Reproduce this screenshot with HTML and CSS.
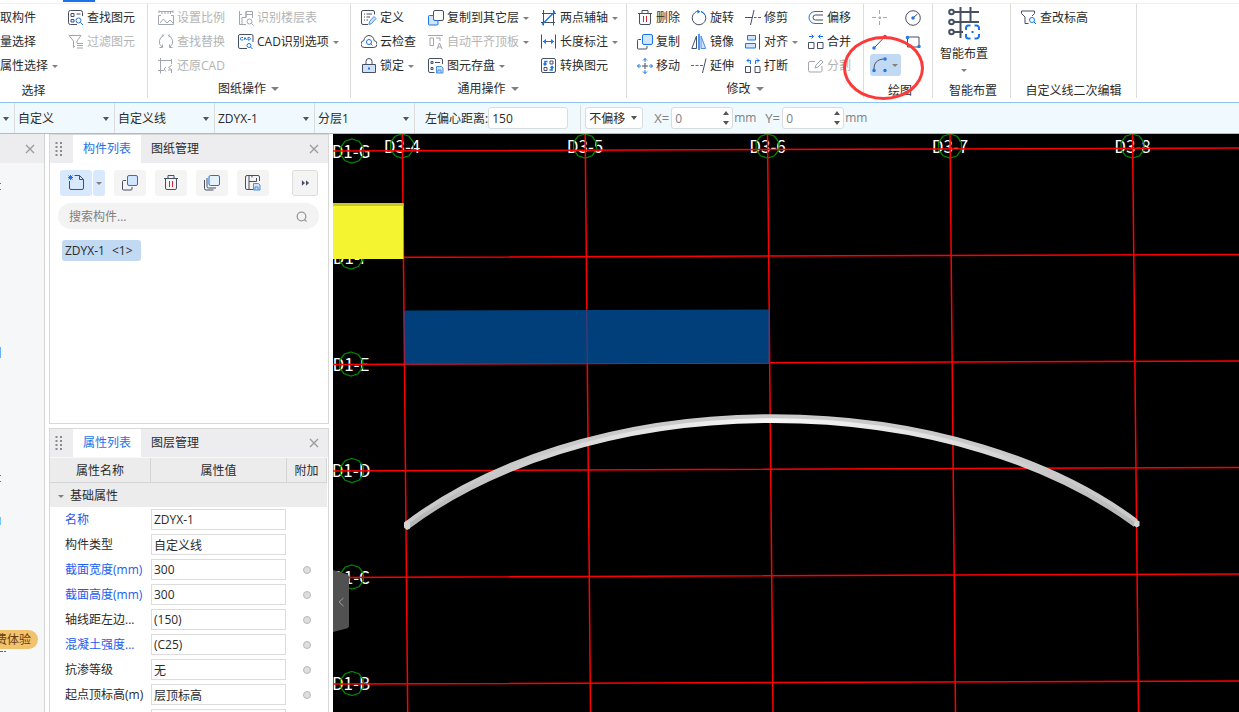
FILE: index.html
```html
<!DOCTYPE html>
<html lang="zh-CN">
<head>
<meta charset="utf-8">
<title>自定义线</title>
<link rel="stylesheet" href="styles.css">
</head>
<body>
<svg class="defs" aria-hidden="true">
  <symbol id="i-find" viewBox="0 0 16 16"><path class="d" d="M9 14.500H2.500a2 2 0 0 1-2-2V2.500a2 2 0 0 1 2-2h10a2 2 0 0 1 2 2V6M3 3.500h3v3H3zM8.500 4h4M3 9.500h3v2.500H3z"/><circle class="b" cx="10.500" cy="10.500" r="2.500"/><path class="b" d="M12.500 12.500l2.500 2.500"/></symbol>
  <symbol id="i-filter" viewBox="0 0 16 16"><path class="d" d="M1 1.500h12L9 7v2M1 1.500L5.500 7v6.500L7 12M9 9.500h6M9 11.500h6M9 14h6"/></symbol>
  <symbol id="i-scale" viewBox="0 0 16 16"><path class="d" d="M1 3V.5M1 1.500h14M15 3V.5M4 2v2M7 2v2M10 2v2M12.500 2v2M3 5.500H.5v9h15v-9H13M2 13l3.500-4L9 13l3-3 3 3"/></symbol>
  <symbol id="i-floor" viewBox="0 0 16 16"><path class="d" d="M1.500 1v13.500H8M1.500 4.500H4M4 7.500h4V1.500h6.500v6.500M8 4.500h6M4 7.500v7M8 1.500v6"/><circle class="d" cx="11.500" cy="11.500" r="2.500"/><path class="d" d="M13.500 13.500l2 2"/></symbol>
  <symbol id="i-replace" viewBox="0 0 16 16"><path class="d" d="M6 1.500A6.500 6.500 0 0 0 4 13M10 1.500A6.500 6.500 0 0 1 12 13M1.500 13.500H4.500V10.500M11.500 10.500v3h3M6 1.500L4 1M10 1.500l2-.5"/></symbol>
  <symbol id="i-cad" viewBox="0 0 16 16"><path class="d" d="M9 14.500H2a1.500 1.500 0 0 1-1.500-1.500V2A1.500 1.500 0 0 1 2 .5h11.500A1.500 1.500 0 0 1 15 2v6"/><path class="b" d="M5 3.500H3.500a1 1 0 0 0-1 1V5a1 1 0 0 0 1 1H5M6 6l1-2.500L8.500 6M10 3.500V6h1.500l1-1.200-1-1.300z"/><circle class="b" cx="11" cy="11.500" r="2"/><path class="b" d="M12.500 13l2 2"/></symbol>
  <symbol id="i-restore" viewBox="0 0 16 16"><path class="d" d="M0 2.500h14M2.500 0v15.500M13.500 1v5M0 12.500h6M14 7l-3.500 2.500L14 12M8 9l-2 2 2 2.500M10 12h3.500v3"/></symbol>
  <symbol id="i-define" viewBox="0 0 16 16"><path class="d" d="M7 14.500H2A1.500 1.500 0 0 1 .5 13V2A1.500 1.500 0 0 1 2 .5h10A1.500 1.500 0 0 1 13.500 2v2.500M3 4h1M5.500 4H11M3 7h1M5.500 7H9M3 10h1M5.500 10H7"/><path class="f" d="M8 14.500l.5-3L13 6.500l2 2-4.500 5z"/></symbol>
  <symbol id="i-cloud" viewBox="0 0 16 16"><path class="d" d="M4 13.500a3.500 3.500 0 0 1-1-7 5 5 0 0 1 10 0 3.500 3.500 0 0 1-1 7z"/><circle class="b" cx="8" cy="8" r="2.500"/><path class="b" d="M9.500 9.500l2 2"/></symbol>
  <symbol id="i-lock" viewBox="0 0 16 16"><path class="f dk" d="M1.500 6.500h13v8h-13z"/><path class="d" d="M5 6V3.500a3 3 0 0 1 6 0V6"/><path class="b" d="M8 9v3M7 10.500h2"/></symbol>
  <symbol id="i-copyto" viewBox="0 0 16 16"><rect class="w" x="5.500" y=".5" width="10" height="10" rx="1.500"/><path class="bf" d="M5.500 5.500h-4a1 1 0 0 0-1 1v7.500a1 1 0 0 0 1 1H9a1 1 0 0 0 1-1v-3.500H6.500a1 1 0 0 1-1-1z"/></symbol>
  <symbol id="i-align" viewBox="0 0 16 16"><path class="d" d="M0 1.500h15M2 4h3.500v7.500H2zM8 4h4v3M9 15l2.500-6 2.500 6M10 13h3"/></symbol>
  <symbol id="i-store" viewBox="0 0 16 16"><path class="d" d="M6.500 14.500H2A1.500 1.500 0 0 1 .5 13V2A1.500 1.500 0 0 1 2 .5h11A1.500 1.500 0 0 1 14.500 2v4M3 3.500h2v2H3zM7 4.500h5M3 9.500h2v2H3z"/><path class="f" d="M8.500 8.500h5l1.500 1.500v5H8.500zM10 15v-3h3v3"/></symbol>
  <symbol id="i-axis" viewBox="0 0 16 16"><path class="d" d="M2.500 0v15.500M12.500 0v15.500M1 3.500h14M0 12.500h14"/><path class="b2" d="M1 14.500L14 1.500"/></symbol>
  <symbol id="i-length" viewBox="0 0 16 16"><path class="d" d="M.5.500v14M14.500.500v14"/><path class="b" d="M2 7.500h11"/><path class="bk" d="M5 5v5L2 7.500zM10 5v5l3-2.500z"/></symbol>
  <symbol id="i-convert" viewBox="0 0 16 16"><rect class="d" x=".5" y=".5" width="14" height="14" rx="1.500"/><path class="d" d="M9 3h3v3H9zM3 9.500h3v3H3z"/><path class="b2" d="M6.500 3.500H4V7M2.500 5.500L4 7l1.500-1.500M8.500 12H11V8.500M9.500 10L11 8.500l1.500 1.500"/></symbol>
  <symbol id="i-trash" viewBox="0 0 16 16"><path class="d" d="M1 3.500h14M5 3V.5h6V3M2.500 4v9a1.500 1.500 0 0 0 1.500 1.500h8a1.500 1.500 0 0 0 1.500-1.500V4"/><path class="r" d="M6.500 6v6M9.500 6v6"/></symbol>
  <symbol id="i-copy" viewBox="0 0 16 16"><rect class="bf" x="5.500" y=".5" width="10" height="10" rx="1.500"/><path class="d" d="M4 5.500H1.500a1 1 0 0 0-1 1V14a1 1 0 0 0 1 1H9a1 1 0 0 0 1-1v-2"/></symbol>
  <symbol id="i-move" viewBox="0 0 16 16"><path class="d" d="M8 5v6M5 8h6"/><path class="b" d="M8 4V.5M6 2.500l2-2 2 2M8 12v3.500M6 13.500l2 2 2-2M4 8H.5M2.500 6l-2 2 2 2M12 8h3.500M13.500 6l2 2-2 2"/></symbol>
  <symbol id="i-rotate" viewBox="0 0 16 16"><path class="d" d="M10 1.500A6.800 6.800 0 1 1 4 2.500"/><path class="b" d="M4 2.500a6.500 6.500 0 0 1 2.500-1.300M10 1.500A6.500 6.500 0 0 1 13.500 4.500"/><path class="bk" d="M6-.3L9.500 1.500 6.500 3.500z"/></symbol>
  <symbol id="i-mirror" viewBox="0 0 16 16"><path class="d" d="M5.500 2v12.500H.8z"/><path class="b2" d="M8 0v16"/><path class="f" d="M10 2v12.500h4.700z"/></symbol>
  <symbol id="i-extend" viewBox="0 0 16 16"><path class="b" d="M0 7.500h3M4.500 7.500h3M9 7.500h3"/><path class="d" d="M15 .5L11.500 15"/></symbol>
  <symbol id="i-trim" viewBox="0 0 16 16"><path class="d" d="M0 7.500h7.500M9 0L5.500 15"/><path class="b" d="M9 7.500h2.500M13 7.500h3"/></symbol>
  <symbol id="i-align2" viewBox="0 0 16 16"><path class="bf" d="M2.500 1.500h8v4.500h-8zM.5 9.500h10V14H.5z"/><path class="d" d="M14.500 0v15.500"/></symbol>
  <symbol id="i-break" viewBox="0 0 16 16"><path class="d" d="M.5 8.500h5v6h-5zM10 8.500h5v6h-5z"/><path class="b" d="M5.500 6V2.500H2M4 .5l-2 2 2 2M10.500 6V2.500h4M12 .5l2 2-2 2"/></symbol>
  <symbol id="i-merge" viewBox="0 0 16 16"><path class="d" d="M.5 8.500h5.500v6H.5zM9.500 8.500H15v6H9.500z"/><path class="b" d="M1 2.500h4.500M3.500.500l2 2-2 2M15 2.500h-4.500M12.500.500l-2 2 2 2"/></symbol>
  <symbol id="i-offset" viewBox="0 0 16 16"><path class="b" d="M15 1.500H7a6 6 0 0 0 0 12h8"/><path class="d" d="M15 5H7.500a2.500 2.500 0 0 0 0 5H15"/></symbol>
  <symbol id="i-split" viewBox="0 0 16 16"><path class="d" d="M7 3.500H2A1.500 1.500 0 0 0 .5 5v7.500A1.500 1.500 0 0 0 2 14h10.500a1.500 1.500 0 0 0 1.500-1.500V8M7 10l1-3L13 2l2 2-5 5z"/></symbol>
  <symbol id="i-point" viewBox="0 0 16 16"><path class="g" d="M7.500 0v4M7.500 11v4M0 7.500h4M11 7.500h4"/><path class="g" d="M7 7h1.500v1.500H7z"/></symbol>
  <symbol id="i-circle" viewBox="0 0 16 16"><circle class="d" cx="8" cy="8" r="7.300"/><path class="d" d="M8.500 7.500l4-3.500"/><circle class="b2" cx="8" cy="8" r="1"/></symbol>
  <symbol id="i-line" viewBox="0 0 16 16"><path class="d" d="M3 13L12 3.500"/><circle class="b2" cx="2" cy="14" r="1"/><circle class="b2" cx="13" cy="2.500" r="1"/></symbol>
  <symbol id="i-rect" viewBox="0 0 16 16"><path class="d" d="M2.500 4.500V13H13M14 11V3H4"/><circle class="b2" cx="2.500" cy="3.500" r="1"/><circle class="b2" cx="14" cy="12.500" r="1"/></symbol>
  <symbol id="i-arc" viewBox="0 0 16 16"><path class="d" d="M2 12C2 6 5 2.500 11.500 2"/><circle class="b2" cx="2" cy="13.500" r="1"/><circle class="b2" cx="13" cy="2" r="1"/><circle class="b2" cx="13" cy="13.500" r="1"/></symbol>
  <symbol id="i-level" viewBox="0 0 16 16"><path class="d" d="M.5 1h13v2.500L11 6M.5 1v2.500L4 7v6.500h3.500"/><circle class="b" cx="11" cy="10" r="2.500"/><path class="b" d="M13 12l2 2"/></symbol>
  <symbol id="i-grid" viewBox="0 0 32 34"><path class="d3" d="M6 6h25M6 16h25M6 26h9M12.500 1v31M22.500 1v15"/><circle class="d3 wf" cx="3.500" cy="6" r="2.300"/><circle class="d3 wf" cx="3.500" cy="16" r="2.300"/><circle class="d3 wf" cx="3.500" cy="26" r="2.300"/><path class="b3" d="M18 24v-2a2.500 2.500 0 0 1 2.500-2.500h2M26.500 19.500h2A2.500 2.500 0 0 1 31 22v2M31 28v2a2.500 2.500 0 0 1-2.500 2.500h-2M22.500 32.500h-2A2.500 2.500 0 0 1 18 30v-2M23.500 26h2"/></symbol>
  <symbol id="i-new" viewBox="0 0 16 16"><path class="d" d="M6.500.5h5l4 4V13a1.500 1.500 0 0 1-1.500 1.500H3A1.500 1.500 0 0 1 1.500 13V6M11.500.500v4h4"/><path class="b" d="M.5.500l4 4M4.500.500l-4 4M2.500 0v5M0 2.500h5"/></symbol>
  <symbol id="i-layers" viewBox="0 0 16 16"><rect class="lf" x="5" y=".5" width="10.500" height="10" rx="1.500"/><path class="d" d="M3 3v8.500A1.500 1.500 0 0 0 4.500 13H12M.5 5v8.500A1.500 1.500 0 0 0 2 15h7.500"/></symbol>
  <symbol id="i-save" viewBox="0 0 16 16"><path class="d" d="M8 14.500H2A1.500 1.500 0 0 1 .5 13V2A1.500 1.500 0 0 1 2 .5h11A1.500 1.500 0 0 1 14.500 2v4M4 .5v14M4 6.500h7.500V3M7 .5v2"/><path class="f" d="M8.500 8.500h5l1.500 1.500v5H8.500zM10 15v-3h3v3"/></symbol>
  <symbol id="i-close" viewBox="0 0 10 10"><path class="c" d="M1 1l8 8M9 1L1 9"/></symbol>
  <symbol id="i-search" viewBox="0 0 12 12"><circle class="c" cx="5.500" cy="5.500" r="4.300"/><path class="c" d="M8.500 8.500l2 2"/></symbol>
  <symbol id="i-more" viewBox="0 0 10 8"><path class="k" d="M1 1l3.500 3L1 7zM5.500 1L9 4 5.500 7z"/></symbol>
  <symbol id="i-grip" viewBox="0 0 8 16"><path class="grip" d="M1.500 1v14M6 1v14"/></symbol>
</svg>

<header class="ribbon">
  <div class="tabline"><span class="tabmark"></span></div>
  <div class="groups">
    <section class="group g-select">
      <div class="tools">
        <div class="col col-cut">
          <button class="tool">拾取构件</button>
          <button class="tool">批量选择</button>
          <button class="tool drop">按属性选择</button>
        </div>
        <div class="col">
          <button class="tool"><svg><use href="#i-find"/></svg>查找图元</button>
          <button class="tool" disabled><svg><use href="#i-filter"/></svg>过滤图元</button>
        </div>
      </div>
      <h2 class="low">选择</h2>
    </section>
    <section class="group g-sheet">
      <div class="tools">
        <div class="col">
          <button class="tool" disabled><svg><use href="#i-scale"/></svg>设置比例</button>
          <button class="tool" disabled><svg><use href="#i-replace"/></svg>查找替换</button>
          <button class="tool" disabled><svg><use href="#i-restore"/></svg>还原CAD</button>
        </div>
        <div class="col">
          <button class="tool" disabled><svg><use href="#i-floor"/></svg>识别楼层表</button>
          <button class="tool drop"><svg><use href="#i-cad"/></svg>CAD识别选项</button>
        </div>
      </div>
      <h2 class="more">图纸操作</h2>
    </section>
    <section class="group g-common">
      <div class="tools">
        <div class="col">
          <button class="tool"><svg><use href="#i-define"/></svg>定义</button>
          <button class="tool"><svg><use href="#i-cloud"/></svg>云检查</button>
          <button class="tool drop"><svg><use href="#i-lock"/></svg>锁定</button>
        </div>
        <div class="col">
          <button class="tool drop"><svg><use href="#i-copyto"/></svg>复制到其它层</button>
          <button class="tool drop" disabled><svg><use href="#i-align"/></svg>自动平齐顶板</button>
          <button class="tool drop"><svg><use href="#i-store"/></svg>图元存盘</button>
        </div>
        <div class="col">
          <button class="tool drop"><svg><use href="#i-axis"/></svg>两点辅轴</button>
          <button class="tool drop"><svg><use href="#i-length"/></svg>长度标注</button>
          <button class="tool"><svg><use href="#i-convert"/></svg>转换图元</button>
        </div>
      </div>
      <h2 class="more">通用操作</h2>
    </section>
    <section class="group g-modify">
      <div class="tools">
        <div class="col">
          <button class="tool"><svg><use href="#i-trash"/></svg>删除</button>
          <button class="tool"><svg><use href="#i-copy"/></svg>复制</button>
          <button class="tool"><svg><use href="#i-move"/></svg>移动</button>
        </div>
        <div class="col">
          <button class="tool"><svg><use href="#i-rotate"/></svg>旋转</button>
          <button class="tool"><svg><use href="#i-mirror"/></svg>镜像</button>
          <button class="tool"><svg><use href="#i-extend"/></svg>延伸</button>
        </div>
        <div class="col">
          <button class="tool"><svg><use href="#i-trim"/></svg>修剪</button>
          <button class="tool drop"><svg><use href="#i-align2"/></svg>对齐</button>
          <button class="tool"><svg><use href="#i-break"/></svg>打断</button>
        </div>
        <div class="col">
          <button class="tool"><svg><use href="#i-offset"/></svg>偏移</button>
          <button class="tool"><svg><use href="#i-merge"/></svg>合并</button>
          <button class="tool" disabled><svg><use href="#i-split"/></svg>分割</button>
        </div>
      </div>
      <h2 class="more">修改</h2>
    </section>
    <section class="group g-draw">
      <div class="tools">
        <div class="col">
          <button class="tool" aria-label="点"><svg><use href="#i-point"/></svg></button>
          <button class="tool" aria-label="直线"><svg><use href="#i-line"/></svg></button>
          <button class="tool drop active" aria-label="弧"><svg><use href="#i-arc"/></svg></button>
        </div>
        <div class="col">
          <button class="tool" aria-label="圆"><svg><use href="#i-circle"/></svg></button>
          <button class="tool" aria-label="矩形"><svg><use href="#i-rect"/></svg></button>
        </div>
      </div>
      <h2 class="low">绘图</h2>
      <span class="callout"></span>
    </section>
    <section class="group g-smart">
      <div class="tools">
        <button class="big"><svg><use href="#i-grid"/></svg><span>智能布置</span><i class="tri"></i></button>
      </div>
      <h2 class="low">智能布置</h2>
    </section>
    <section class="group g-edit">
      <div class="tools">
        <div class="col">
          <button class="tool"><svg><use href="#i-level"/></svg>查改标高</button>
        </div>
      </div>
      <h2 class="low">自定义线二次编辑</h2>
    </section>
  </div>
</header>

<form class="options">
  <div class="pick pick-cut"><select aria-label="楼层"><option></option></select></div>
  <div class="pick"><select aria-label="类别"><option>自定义</option></select></div>
  <div class="pick"><select aria-label="类型"><option>自定义线</option></select></div>
  <div class="pick"><select aria-label="构件"><option>ZDYX-1</option></select></div>
  <div class="pick"><select aria-label="分层"><option>分层1</option></select></div>
  <label class="ecc" for="ecc">左偏心距离:</label>
  <input id="ecc" class="box wide" value="150">
  <span class="rule"></span>
  <div class="pick boxed"><select aria-label="偏移方式"><option>不偏移</option></select></div>
  <label class="axis" for="dx">X=</label>
  <span class="spin"><input id="dx" class="box" value="0" disabled><i class="up"></i><i class="down"></i></span>
  <span class="unit">mm</span>
  <label class="axis" for="dy">Y=</label>
  <span class="spin"><input id="dy" class="box" value="0" disabled><i class="up"></i><i class="down"></i></span>
  <span class="unit">mm</span>
</form>

<main class="work">
  <aside class="side">
    <div class="bar"><button class="x" aria-label="关闭"><svg><use href="#i-close"/></svg></button></div>
    <svg class="marks" aria-hidden="true"><path stroke="#4a7aa8" d="M0 20.500h1M0 26.500h1M0 312.500h1M0 318.500h1"/><path stroke="#6ab0fa" d="M.5 184v11"/><path stroke="#7cc4fa" d="M.5 354v8"/><path stroke="#666" d="M0 488.500h3M4 488.500h2"/></svg>
    <span class="trial">免费体验</span>
  </aside>

  <div class="panels">
    <section class="panel parts">
      <div class="bar">
        <svg class="grab"><use href="#i-grip"/></svg>
        <button class="tab on">构件列表</button><button class="tab">图纸管理</button>
        <button class="x" aria-label="关闭"><svg><use href="#i-close"/></svg></button>
      </div>
      <div class="actions">
        <div class="pair"><button aria-label="新建"><svg><use href="#i-new"/></svg></button><button class="arrow" aria-label="新建选项"><i class="tri"></i></button></div>
        <button aria-label="复制"><svg><use href="#i-copy"/></svg></button>
        <button aria-label="删除"><svg><use href="#i-trash"/></svg></button>
        <button aria-label="层间复制"><svg><use href="#i-layers"/></svg></button>
        <button aria-label="存档"><svg><use href="#i-save"/></svg></button>
        <button class="next" aria-label="更多"><svg><use href="#i-more"/></svg></button>
      </div>
      <div class="search"><input aria-label="搜索构件" placeholder="搜索构件..."><svg><use href="#i-search"/></svg></div>
      <ul class="list"><li><span>ZDYX-1</span><span>&lt;1&gt;</span></li></ul>
    </section>

    <section class="panel props">
      <div class="bar">
        <svg class="grab"><use href="#i-grip"/></svg>
        <button class="tab on">属性列表</button><button class="tab">图层管理</button>
        <button class="x" aria-label="关闭"><svg><use href="#i-close"/></svg></button>
      </div>
      <table>
        <colgroup><col class="c-name"><col class="c-value"><col class="c-add"></colgroup>
        <thead><tr><th>属性名称</th><th>属性值</th><th>附加</th></tr></thead>
        <tbody>
          <tr class="cat"><td colspan="3"><i class="tri"></i>基础属性</td></tr>
          <tr><td class="hot"><label for="p1">名称</label></td><td><input id="p1" value="ZDYX-1"></td><td></td></tr>
          <tr><td><label for="p2">构件类型</label></td><td><input id="p2" value="自定义线"></td><td></td></tr>
          <tr><td class="hot"><label for="p3">截面宽度(mm)</label></td><td><input id="p3" value="300"></td><td><input type="checkbox" aria-label="附加截面宽度"></td></tr>
          <tr><td class="hot"><label for="p4">截面高度(mm)</label></td><td><input id="p4" value="300"></td><td><input type="checkbox" aria-label="附加截面高度"></td></tr>
          <tr><td><label for="p5">轴线距左边...</label></td><td><input id="p5" value="(150)"></td><td><input type="checkbox" aria-label="附加轴线距左边"></td></tr>
          <tr><td class="hot"><label for="p6">混凝土强度...</label></td><td><input id="p6" value="(C25)"></td><td><input type="checkbox" aria-label="附加混凝土强度"></td></tr>
          <tr><td><label for="p7">抗渗等级</label></td><td><input id="p7" value="无"></td><td><input type="checkbox" aria-label="附加抗渗等级"></td></tr>
          <tr><td><label for="p8">起点顶标高(m)</label></td><td><input id="p8" value="层顶标高"></td><td><input type="checkbox" aria-label="附加起点顶标高"></td></tr>
          <tr><td></td><td><input aria-label="终点顶标高"></td><td></td></tr>
        </tbody>
      </table>
    </section>
  </div>

  <div class="view">
    <svg class="drawing" role="img" aria-label="轴网平面">
      <defs>
        <linearGradient id="face" gradientUnits="userSpaceOnUse" x1="72" y1="0" x2="806" y2="0">
          <stop offset="0" stop-color="#b4b4b4"/><stop offset=".25" stop-color="#dcdcdc"/><stop offset=".5" stop-color="#f6f6f6"/><stop offset=".75" stop-color="#dfdfdf"/><stop offset="1" stop-color="#b4b4b4"/>
        </linearGradient>
        <path id="bubble" d="M0-12L7-9.700 11.400-3.700V3.700L7 9.700 0 12-7 9.700-11.400 3.700V-3.700L-7-9.700z"/>
      </defs>
      <g class="names">
        <text x="18" y="24">D1-G</text><text x="18" y="130">D1-F</text><text x="18" y="237">D1-E</text>
        <text x="18" y="343">D1-D</text><text x="18" y="450">D1-C</text><text x="18" y="556">D1-B</text>
        <text x="69" y="19">D3-4</text><text x="252" y="19">D3-5</text><text x="434.500" y="19">D3-6</text>
        <text x="617" y="19">D3-7</text><text x="799.500" y="19">D3-8</text>
      </g>
      <g class="bubbles">
        <use href="#bubble" x="19" y="17"/><use href="#bubble" x="18" y="123"/><use href="#bubble" x="18" y="230"/>
        <use href="#bubble" x="19" y="336.500"/><use href="#bubble" x="19" y="443"/><use href="#bubble" x="19" y="549.500"/>
        <use href="#bubble" x="69" y="12"/><use href="#bubble" x="252" y="12"/><use href="#bubble" x="434.500" y="12"/>
        <use href="#bubble" x="617" y="12"/><use href="#bubble" x="799.500" y="12"/>
      </g>
      <g class="axes">
        <path d="M0 17L906 14M0 123.500L906 120.500M0 230.500L906 227M0 337L906 333.500M0 443.500L906 440M0 550L906 547"/>
        <path d="M69.300 0L74.700 578M252.200 0L257.500 578M434.500 0L440 578M617 0L622.500 578M799.500 0L805.500 578"/>
      </g>
      <path fill="#f4f431" d="M0 69.500h70.500V125H0z"/><path fill="#c8c828" d="M0 69h70.500v3H0z"/>
      <path fill="#003f7a" d="M71.500 176.500L436 175.500V229.300L72 230z"/>
      <path class="under" d="M253.700 176L254.300 229.700M436 176V229.300L72 230L71.500 176.500"/>
      <path class="beam" stroke="url(#face)" d="M74 392A470 286 0 0 1 803 390"/>
      <path class="beam-top" d="M73 389.500A470 286 0 0 1 803.500 387"/>
      <path fill="#d4d4d4" d="M71 388.500l3-2 3 3v5l-3 1.500-3-2.500zM801 389l3-3 2.500 1.500v4.500l-3 1.500-2.500-2z"/>
    </svg>
    <button class="fold" aria-label="收起面板"><svg viewBox="0 0 8 12"><path d="M6.500 2L2 6l4.500 4"/></svg></button>
  </div>
</main>
</body>
</html>
```
FILE: styles.css
```css
* { box-sizing: border-box; }
html, body { height: 100%; }
body {
  margin: 0;
  display: flex;
  flex-direction: column;
  overflow: hidden;
  background: #fff;
  color: #2b2b2b;
  font: 12px/16px "Open Sans", "Noto Sans CJK SC", sans-serif;
}
button, input, select { font: inherit; color: inherit; margin: 0; padding: 0; border: 0; background: none; }
h2, ul { margin: 0; padding: 0; font-weight: 400; font-size: 12px; list-style: none; }
.defs { position: absolute; width: 0; height: 0; }

/* icon strokes */
.d, .b, .b2, .r, .g, .c, .d3, .b3, .grip { fill: none; stroke: #474f63; }
.b, .b2, .b3 { stroke: #1a73e8; }
.b2 { stroke-width: 1.5px; }
.bk { fill: #1a73e8; }
.r { stroke: #d9262c; }
.g { stroke: #a8a8a8; }
.c { stroke: #9a9a9a; stroke-width: 1.3px; }
.d3 { stroke-width: 2px; }
.b3 { stroke-width: 2px; }
.wf, .w { fill: #fff; }
.w { stroke: #474f63; }
.f { fill: #cfe2fa; stroke: #4a90e2; }
.dk { stroke: #474f63; }
.bf { fill: #d3e5fc; stroke: #1a73e8; }
.lf { fill: #e6f1fe; stroke: #1a73e8; }
.k { fill: #474f63; }
.grip { stroke: #8a8a8e; stroke-width: 2px; stroke-dasharray: 2 2; }

/* ribbon */
.ribbon { flex: none; height: 102px; }
.tabline { height: 4px; border-bottom: 1px solid #efeff1; padding-left: 63px; }
.tabmark { display: block; width: 32px; height: 2px; background: #1a73e8; }
.groups { display: flex; height: 94px; }
.group { flex: none; position: relative; display: flex; flex-direction: column; border-right: 1px solid #dcdcdc; }
.tools { display: flex; flex: none; height: 75px; padding-top: 2px; }
.col { display: flex; flex-direction: column; align-items: flex-start; }
.tool { display: flex; align-items: center; gap: 3px; height: 24px; white-space: nowrap; }
.tool svg { width: 16px; height: 16px; flex: none; }
.tool:disabled { color: #b4b4b4; }
.tool:disabled svg { opacity: .5; }
.drop::after, .more::after, .tri {
  content: "";
  width: 0;
  height: 0;
  border: 3px solid transparent;
  border-top-color: #808080;
  border-bottom: 0;
}
.drop::after { margin-left: 1px; }
.group h2 { display: flex; flex: 1; align-items: center; justify-content: center; }
.more::after { border-width: 4px 4px 0; margin-left: 5px; }
.group .low { padding-top: 4px; }
.g-select { width: 148px; overflow: hidden; }
.g-select .tools { gap: 6px; }
.g-select .low { padding-right: 80px; }
.col-cut { width: 62px; }
.col-cut .tool { margin-left: -12px; }
.g-sheet { width: 203px; padding-left: 10px; }
.g-sheet .tools { gap: 13px; }
.g-sheet h2 { padding-right: 11px; }
.g-common { width: 276px; padding-left: 10px; }
.g-common .tools { gap: 12px; }
.g-common h2 { padding-right: 11px; }
.g-modify { width: 237px; padding-left: 10px; }
.g-modify .tools { gap: 11px; }
.g-modify .col:last-child { margin-left: -1px; }
.g-modify h2 { padding-right: 10px; }
.g-draw { width: 69px; padding-left: 6px; }
.g-draw .tools { gap: 2px; }
.g-draw .col { width: 31px; }
.g-draw .tool { padding-left: 2px; }
.g-draw .active { height: 22px; width: 31px; border-radius: 3px; background: #c1d9f2; }
.g-draw .low { padding-right: 2px; }
.g-smart { width: 78px; }
.g-smart .low { padding-left: 3px; }
.big { display: flex; flex-direction: column; align-items: center; width: 62px; gap: 6px; }
.big svg { width: 32px; height: 34px; flex: none; }
.big .tri { margin-top: 1px; }
.g-edit { width: 126px; padding-left: 10px; }
.g-edit .low { padding-right: 10px; }
.callout {
  position: absolute;
  left: -21px;
  top: 32px;
  width: 81px;
  height: 64px;
  border: 3px solid #fb3a39;
  border-radius: 50%;
  pointer-events: none;
  z-index: 2;
}

/* option bar */
.options {
  display: flex;
  align-items: center;
  height: 32px;
  flex: none;
  background: #f0f9fe;
  border-top: 1px solid #90c3f5;
  border-bottom: 1px solid #90c3f5;
}
.pick { position: relative; flex: none; width: 100px; height: 30px; border-right: 1px solid #dcdcdc; }
.pick select { appearance: none; width: 100%; height: 100%; padding: 1px 16px 0 3px; outline: 0; }
.pick::after {
  content: "";
  position: absolute;
  right: 5px;
  top: 14px;
  border: 3px solid transparent;
  border-top: 4px solid #555;
  border-bottom: 0;
  pointer-events: none;
}
.pick-cut { width: 15px; }
.ecc { margin-left: 10px; padding-top: 1px; }
.box { width: 62px; height: 22px; padding: 0 3px; border: 1px solid #d9dde0; border-radius: 3px; background: #fff; }
.wide { width: 80px; }
.rule { width: 1px; height: 26px; margin: 0 4px 0 12px; background: #dcdcdc; }
.boxed { width: 58px; height: 22px; border: 1px solid #d9dde0; border-radius: 3px; background: #fff; }
.boxed::after { top: 8px; }
.axis { width: 17px; margin-left: 11px; color: #808080; font-size: 13px; }
.unit { width: 21px; margin-left: 0; color: #808080; font-size: 12px; padding-left: 1px; }
.box:disabled { color: #808080; }
.spin { position: relative; display: flex; }
.up, .down { position: absolute; right: 4px; top: 4px; border: 3px solid transparent; border-bottom: 4px solid #555; border-top: 0; }
.down { top: 14px; border-top: 4px solid #555; border-bottom: 0; }

/* work area */
.work { flex: 1; min-height: 0; display: flex; }
.side { position: relative; flex: none; width: 45px; background: #f5f7f9; border-right: 1px solid #d4d4d4; overflow: hidden; }
.bar { display: flex; align-items: center; height: 28px; background: #ededf0; }
.side .bar { height: 29px; }
.x { display: flex; margin: 0 9px 0 auto; }
.x svg { width: 10px; height: 10px; }
.marks { display: block; width: 100%; height: 500px; }
.trial {
  position: absolute;
  left: -17px;
  top: 496px;
  width: 55px;
  height: 19px;
  line-height: 19px;
  border-radius: 10px;
  background: #f0c36c;
  color: #6b3c10;
}
.panels { flex: none; width: 280px; margin: 0 4px; display: flex; flex-direction: column; gap: 4px; }
.panel { border: 1px solid #d8d8d8; flex: none; background: #fff; }
.parts { height: 290px; }
.props { flex: 1; min-height: 0; overflow: hidden; border-bottom: 0; }
.grab { width: 8px; height: 16px; margin: 0 10px 0 5px; }
.tab { height: 100%; width: 68px; }
.on { background: #fff; color: #1a73e8; }
.actions { display: flex; gap: 9px; padding: 7px 10px 0; }
.actions button { display: flex; align-items: center; justify-content: center; width: 32px; height: 26px; border-radius: 3px; background: #f4f4f5; }
.actions svg { width: 16px; height: 16px; }
.pair { display: flex; gap: 1px; }
.actions .pair button { background: #d8e9fd; }
.actions .arrow { width: 12px; }
.actions .next { width: 26px; margin-left: auto; border: 1px solid #dcdcdc; }
.actions .next svg { width: 9px; height: 8px; }
.search { display: flex; align-items: center; height: 26px; margin: 7px 9px 0 8px; padding: 1px 11px 0; border-radius: 13px; background: #f3f3f3; }
.search input { flex: 1; min-width: 0; outline: 0; }
.search input::placeholder { color: #808080; }
.search svg { width: 12px; height: 12px; }
.list { display: flex; padding: 11px 12px; }
.list li { display: flex; gap: 7px; width: 79px; height: 21px; line-height: 21px; padding-left: 3px; border-radius: 3px; background: #c1d9f2; }
table { width: 277px; table-layout: fixed; border-collapse: separate; border-spacing: 0; border-top: 1px solid #f8f8f8; }
.c-name { width: 101px; }
.c-value { width: 136px; }
th { height: 25px; padding: 1px 0 0; font-weight: 400; background: #ececec; border-right: 1px solid #d5d5d5; border-bottom: 1px solid #d5d5d5; }
td { height: 25px; padding: 0; white-space: nowrap; }
td:first-child { padding: 1px 0 0 15px; }
td:last-child { text-align: center; }
.hot { color: #1a5cf0; }
.cat td:first-child { height: 24px; padding: 1px 0 0 8px; background: #ececec; text-align: left; }
.cat .tri { display: inline-block; margin-right: 6px; vertical-align: middle; }
td input { display: block; width: 135px; height: 21px; padding: 0 2px; border: 1px solid #dcdcdc; background: #fff; }
td input[type="checkbox"] { appearance: none; display: block; margin: 0 auto; width: 8px; height: 8px; border: 1px solid #b9b9bd; border-radius: 50%; background: #dedee0; }

/* drawing */
.view { position: relative; flex: 1; min-width: 0; background: #000; overflow: hidden; }
.drawing { display: block; width: 100%; height: 100%; }
.names { fill: #fff; font: 400 17px "Noto Sans CJK SC", sans-serif; text-anchor: middle; }
.bubbles { fill: none; stroke: #008a00; stroke-width: 1.2px; }
.axes { fill: none; stroke: #f00; stroke-width: 1.5px; }
.under { fill: none; stroke: #5c3570; }
.beam { fill: none; stroke-width: 7px; }
.beam-top { fill: none; stroke: #cacaca; stroke-width: 4px; }
.fold {
  position: absolute;
  left: 0;
  top: 436px;
  width: 16px;
  height: 62px;
  background: #515151;
  clip-path: polygon(0 0, 90% 7%, 100% 10%, 100% 91%, 90% 94%, 0 100%);
}
.fold svg { width: 8px; height: 12px; fill: none; stroke: #999; vertical-align: middle; }
```
